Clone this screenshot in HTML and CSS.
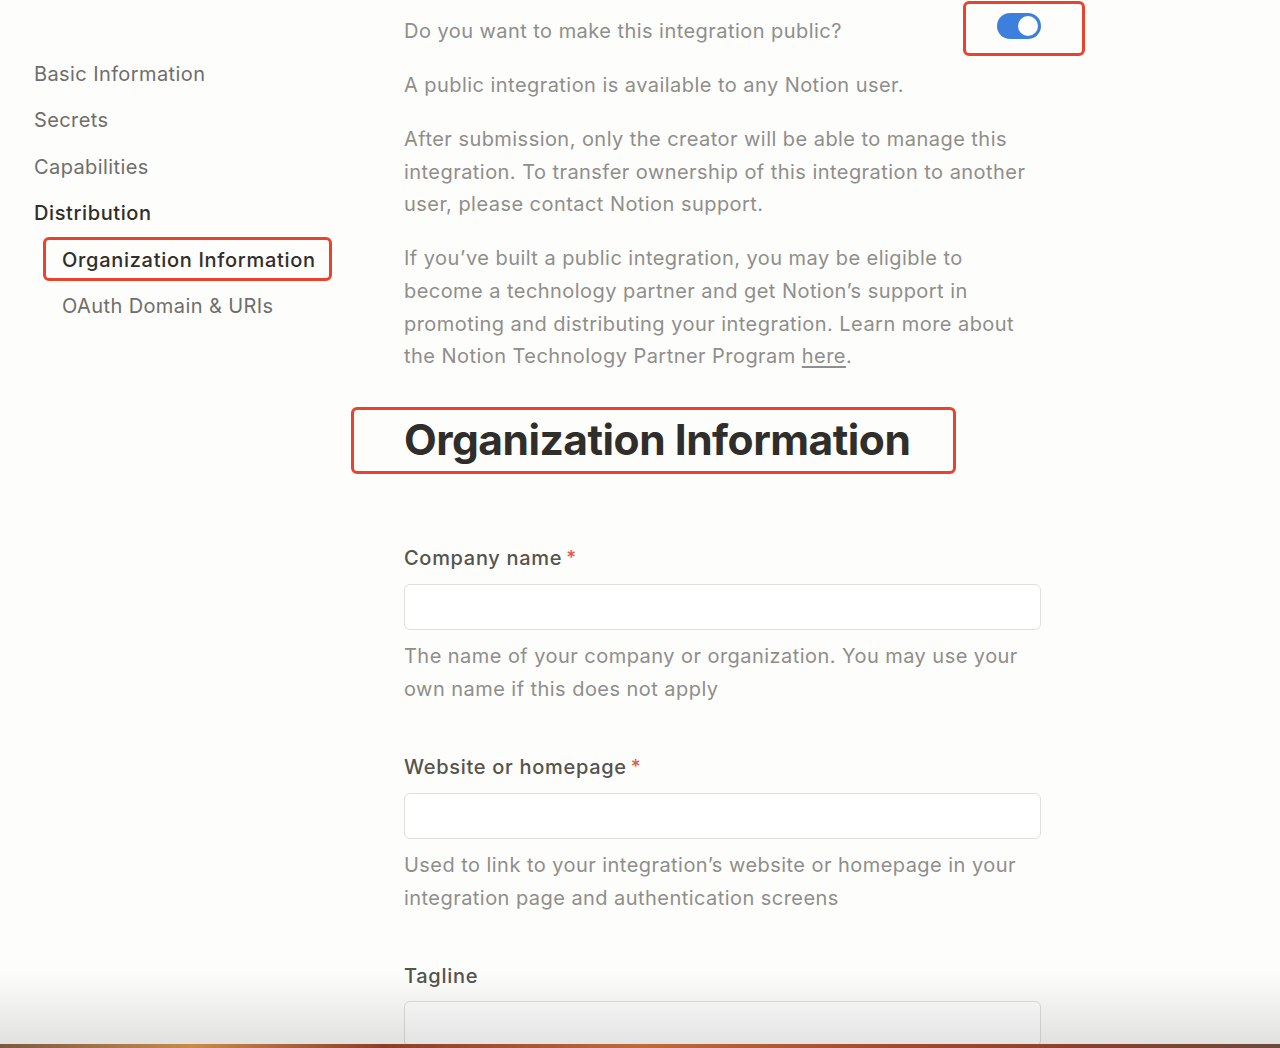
FILE: index.html
```html
<!DOCTYPE html>
<html lang="en">
<head>
<meta charset="utf-8">
<title>Integration settings</title>
<link rel="stylesheet" href="styles.css">
</head>
<body>
<div class="page">
  <nav class="sidebar">
    <div class="nav-item">Basic Information</div>
    <div class="nav-item">Secrets</div>
    <div class="nav-item">Capabilities</div>
    <div class="nav-item nav-section">Distribution</div>
    <div class="nav-item nav-sub nav-active"><span class="mark mark-nav"></span>Organization Information</div>
    <div class="nav-item nav-sub">OAuth Domain &amp; URIs</div>
  </nav>
  <main class="content">
    <div class="row-toggle">
      <p class="text">Do you want to make this integration public?</p>
      <div class="toggle-wrap">
        <span class="mark mark-toggle"></span>
        <div class="toggle"><span class="knob"></span></div>
      </div>
    </div>
    <p class="text">A public integration is available to any Notion user.</p>
    <p class="text">After submission, only the creator will be able to manage this integration. To transfer ownership of this integration to another user, please contact Notion support.</p>
    <p class="text">If you’ve built a public integration, you may be eligible to become a technology partner and get Notion’s support in promoting and distributing your integration. Learn more about the Notion Technology Partner Program <a class="link" href="#">here</a>.</p>
    <h1 class="heading"><span class="mark mark-heading"></span>Organization Information</h1>

    <div class="field">
      <label class="label">Company name<span class="req">*</span></label>
      <div class="input"></div>
      <p class="help">The name of your company or organization. You may use your own name if this does not apply</p>
    </div>
    <div class="field">
      <label class="label">Website or homepage<span class="req">*</span></label>
      <div class="input"></div>
      <p class="help">Used to link to your integration’s website or homepage in your integration page and authentication screens</p>
    </div>
    <div class="field">
      <label class="label">Tagline</label>
      <div class="input"></div>
    </div>
  </main>
</div>
<div class="bottom-shade"></div>
<div class="bottom-strip"></div>
</body>
</html>
```
FILE: styles.css
```css
html, body {
  margin: 0;
  padding: 0;
  background: #fdfdfc;
  height: 100%;
  overflow: hidden;
}
body {
  font-family: Inter, "Noto Sans", sans-serif;
  color: #37352f;
  -webkit-font-smoothing: antialiased;
}
.page {
  display: grid;
  grid-template-columns: 404px 637px;
}
.sidebar {
  padding: 51px 0 0 34px;
  display: flex;
  flex-direction: column;
}
.nav-item {
  font-size: 20px;
  line-height: 46.4px;
  color: #6f6e6b;
  position: relative;
  letter-spacing: 0.4px;
  white-space: nowrap;
}
.nav-section {
  color: #2f2e2a;
  font-weight: 500;
  letter-spacing: 0.6px;
}
.nav-sub {
  padding-left: 28px;
}
.nav-active {
  color: #2f2e2a;
  font-weight: 500;
  letter-spacing: 0.7px;
}
.mark {
  position: absolute;
  border: 3px solid #e8442d;
  border-radius: 6px;
  pointer-events: none;
}
.mark-nav {
  left: 9px;
  top: 0;
  width: 283px;
  height: 38px;
}
.content {
  padding-top: 15px;
  display: flex;
  flex-direction: column;
}
.text {
  margin: 0 0 21.5px;
  font-size: 20px;
  line-height: 32.6px;
  color: #8f8e8b;
  letter-spacing: 0.45px;
}
.row-toggle {
  display: flex;
  justify-content: space-between;
  align-items: flex-start;
}
.toggle-wrap {
  position: relative;
  margin-top: -2px;
}
.toggle {
  width: 44px;
  height: 26px;
  border-radius: 13px;
  background: #3d7fdc;
  position: relative;
}
.knob {
  position: absolute;
  right: 3px;
  top: 3px;
  width: 20px;
  height: 20px;
  border-radius: 50%;
  background: #fff;
}
.mark-toggle {
  left: -34px;
  top: -12px;
  width: 116px;
  height: 49px;
}
.link {
  color: #8f8e8b;
  text-decoration: underline;
  text-underline-offset: 3px;
}
.heading {
  position: relative;
  margin: 19px 0 75px;
  font-size: 42.5px;
  line-height: 54px;
  font-weight: 700;
  color: #2f2e2a;
  letter-spacing: -0.5px;
}
.mark-heading {
  left: -53px;
  top: -6px;
  width: 599px;
  height: 61px;
}
.field {
  display: flex;
  flex-direction: column;
  margin-bottom: 46px;
}
.label {
  font-size: 20px;
  line-height: 32px;
  font-weight: 500;
  color: #55534e;
  letter-spacing: 0.7px;
}
.req {
  color: #e45745;
  margin-left: 4px;
  font-size: 19px;
  position: relative;
  top: -1px;
}
.input {
  margin-top: 9px;
  height: 44px;
  border: 1px solid #e1e0de;
  border-radius: 6px;
  background: #fff;
}
.help {
  margin: 10px 0 0;
  font-size: 20px;
  line-height: 32.5px;
  color: #8f8e8b;
  letter-spacing: 0.45px;
}
.bottom-shade {
  position: fixed;
  left: 0;
  right: 0;
  bottom: 4px;
  height: 72px;
  background: linear-gradient(to bottom, rgba(0,0,0,0), rgba(0,0,0,0.11));
  pointer-events: none;
}
.bottom-strip {
  position: fixed;
  left: 0;
  right: 0;
  bottom: 0;
  height: 4px;
  background: linear-gradient(to right, #7a5a44 0%, #c98a4a 15%, #8a3e2a 30%, #c06a3a 50%, #a24a2e 70%, #8a4030 85%, #6a4a3a 100%);
}
```
